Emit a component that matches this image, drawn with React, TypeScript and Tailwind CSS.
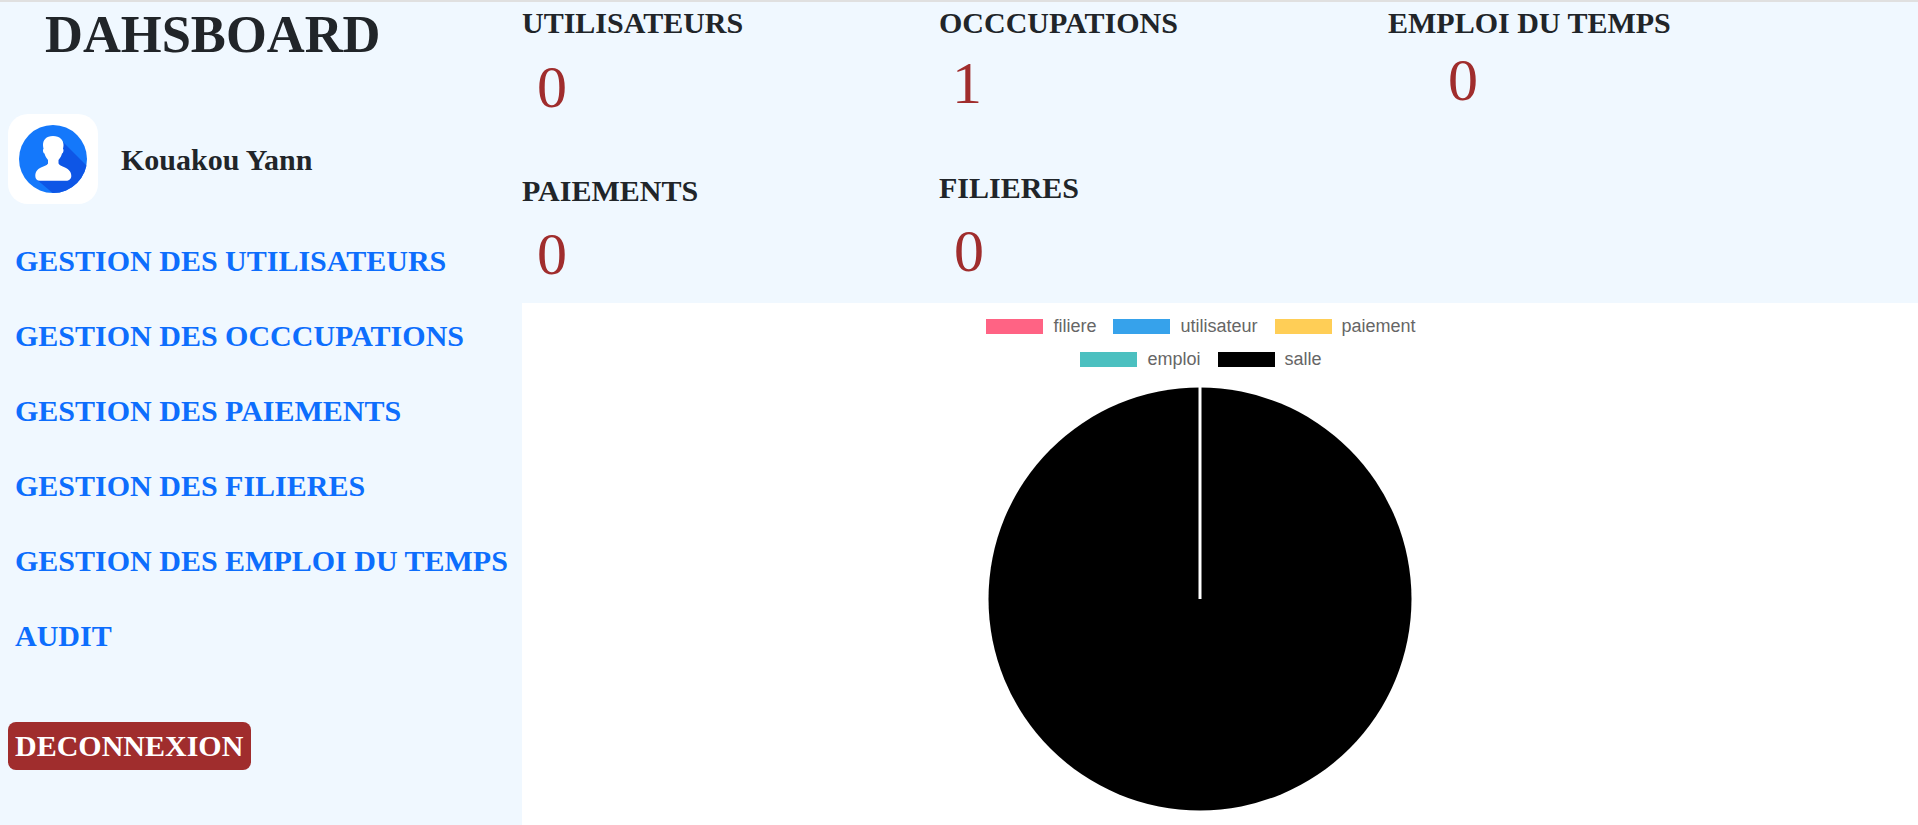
const navLinks = [
  "GESTION DES UTILISATEURS",
  "GESTION DES OCCCUPATIONS",
  "GESTION DES PAIEMENTS",
  "GESTION DES FILIERES",
  "GESTION DES EMPLOI DU TEMPS",
  "AUDIT",
];

const legendRows = [
  [
    { label: "filiere", color: "bg-[#ff6384]" },
    { label: "utilisateur", color: "bg-[#36a2eb]" },
    { label: "paiement", color: "bg-[#ffce56]" },
  ],
  [
    { label: "emploi", color: "bg-[#4bc0c0]" },
    { label: "salle", color: "bg-black" },
  ],
];

function Avatar() {
  return (
    <div className="flex h-[90px] w-[90px] items-center justify-center rounded-[20px] bg-white">
      <svg width="68" height="68" viewBox="0 0 68 68">
        <defs>
          <clipPath id="disc">
            <circle cx="34" cy="34" r="34" />
          </clipPath>
        </defs>
        <circle cx="34" cy="34" r="34" fill="#1478fb" />
        <path
          d="M44 17 L80 53 L60 90 L17 54 Z"
          fill="#0e56e6"
          clipPath="url(#disc)"
        />
        <path
          fill="#fff"
          d="M34 11C27 11 24 15 24 20C24 22 24.500 23 24.500 24C23.500 24.500 24 28 25.500 28.500C26 31 27.500 33 29 35L29 38C29 40 25 41 22 42.500C18 44.500 16.300 47 16.300 51C16.300 54 18 55.800 21 55.800L47 55.800C50 55.800 52.300 54 52.300 51C52.300 47 50 44.500 46 42.500C43 41 39.500 40 39.500 38L39.500 35C41 33 42.500 31 43 28.500C44.500 28 45 24.500 44 24C44 23 44.500 22 44.500 20C44.500 15 41 11 34 11Z"
        />
      </svg>
    </div>
  );
}

function Stat({
  title,
  value,
  className,
  valueClassName,
}: {
  title: string;
  value: number;
  className: string;
  valueClassName: string;
}) {
  return (
    <div className={className}>
      <h3 className="text-[30px] leading-[36px] font-bold text-[#212529]">
        {title}
      </h3>
      <p className={`text-[60px] leading-[72px] text-[#a02d2d] ${valueClassName}`}>
        {value}
      </p>
    </div>
  );
}

function PieChart() {
  return (
    <svg width="424" height="424" viewBox="0 0 424 424" className="mt-[11px]">
      <circle cx="212" cy="212" r="211.500" fill="#000" />
      <line x1="212" y1="0" x2="212" y2="212" stroke="#fff" strokeWidth="3" />
    </svg>
  );
}

export default function App() {
  return (
    <div className="h-[825px] overflow-hidden border-t-2 border-[#e0e0e0] bg-[#f0f8ff] font-['Liberation_Serif',serif]">
      <div className="flex h-full">
        {/* Sidebar */}
        <aside className="w-[522px] shrink-0 px-2">
          <h1 className="mt-[2px] ml-[37px] text-[52.500px] leading-[61px] font-bold text-[#212529]">
            DAHSBOARD
          </h1>
          <div className="mt-[49px] flex items-center gap-[23px]">
            <Avatar />
            <span className="text-[30px] font-bold text-[#212529]">
              Kouakou Yann
            </span>
          </div>
          <nav className="mt-[40px] ml-[7px] flex flex-col gap-[41px]">
            {navLinks.map((link) => (
              <a
                key={link}
                href="#"
                className="text-[30px] leading-[34px] font-bold whitespace-nowrap text-[#0d6efd]"
              >
                {link}
              </a>
            ))}
          </nav>
          <button className="mt-[69px] rounded-lg bg-[#a02d2d] py-[6px] pr-[8px] pl-[7px] text-[30px] leading-[36px] font-bold text-white">
            DECONNEXION
          </button>
        </aside>

        <main className="flex min-w-0 flex-1 flex-col">
          {/* Counters */}
          <div className="h-[301px] shrink-0">
            <div className="flex">
              <Stat title="UTILISATEURS" value={0} className="w-[417px] pt-[3px]" valueClassName="ml-[15px] mt-[10px]" />
              <Stat title="OCCCUPATIONS" value={1} className="w-[449px] pt-[3px]" valueClassName="ml-[13px] mt-[6px]" />
              <Stat title="EMPLOI DU TEMPS" value={0} className="pt-[3px]" valueClassName="ml-[60px] mt-[3px]" />
            </div>
            <div className="mt-[50px] flex">
              <Stat title="PAIEMENTS" value={0} className="w-[417px]" valueClassName="ml-[15px] mt-[9px]" />
              <Stat title="FILIERES" value={0} className="-mt-[3px]" valueClassName="ml-[15px] mt-[9px]" />
            </div>
          </div>

          {/* Chart */}
          <div className="flex flex-1 flex-col items-center bg-white pr-[38px] font-['Liberation_Sans',sans-serif] text-[18px] leading-[33px] text-[#666]">
            <div className="mt-[7px] flex flex-col items-center">
              {legendRows.map((row, i) => (
                <div key={i} className="flex gap-[17px]">
                  {row.map((item) => (
                    <span key={item.label} className="flex items-center gap-[10px]">
                      <span className={`h-[15px] w-[57px] ${item.color}`} />
                      {item.label}
                    </span>
                  ))}
                </div>
              ))}
            </div>
            <div className="-ml-[2px]">
              <PieChart />
            </div>
          </div>
        </main>
      </div>
    </div>
  );
}
